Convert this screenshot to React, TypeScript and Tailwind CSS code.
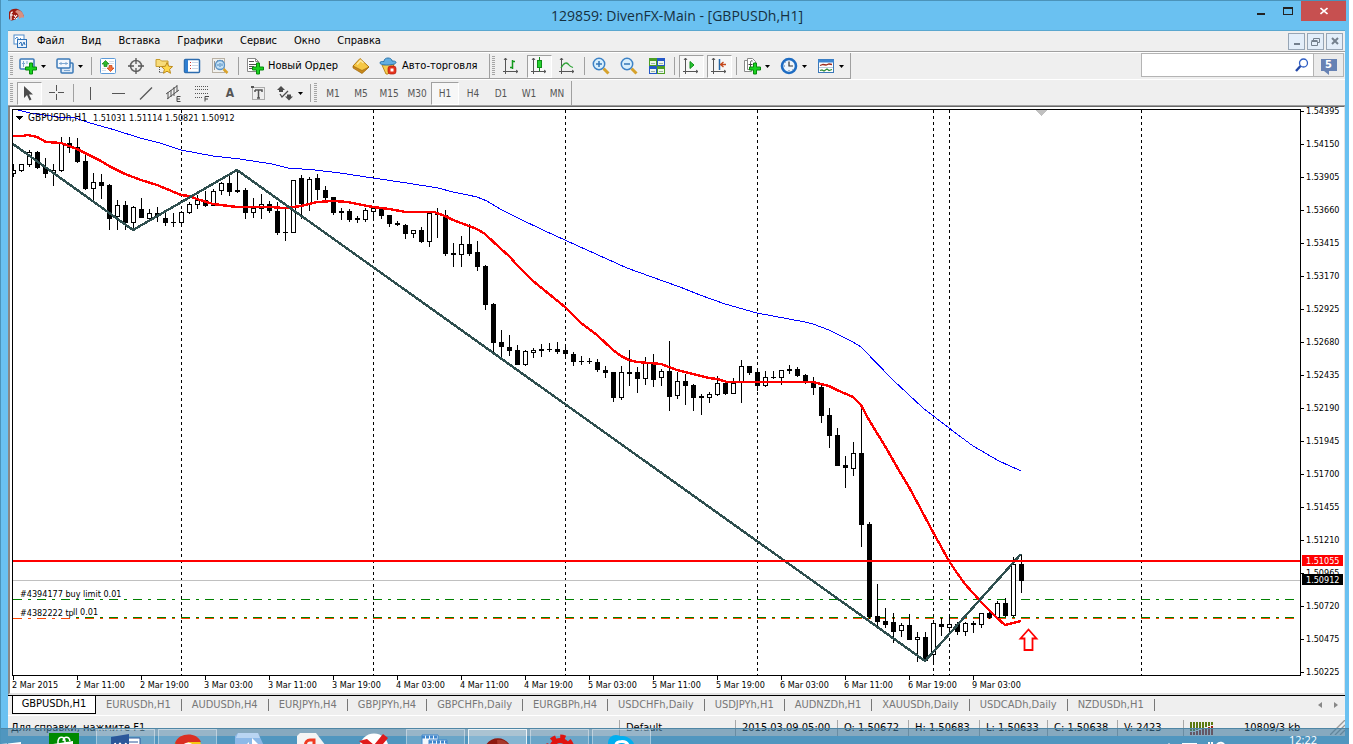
import type { ReactNode } from 'react'
import clsx from 'clsx'

type Candle = [high: number, top: number, bottom: number, low: number, filled: 0 | 1]

const FIRST_X = 13
const STEP = 8

const candles: Candle[] = [
  [164, 170, 174, 177, 0], [164, 164, 171, 172, 0], [150, 152, 165, 167, 0], [151, 152, 168, 169, 1],
  [158, 167, 174, 178, 1], [164, 170, 173, 186, 0], [137, 143, 171, 172, 0], [137, 143, 148, 153, 1],
  [138, 147, 162, 163, 1], [155, 161, 189, 190, 1], [173, 182, 189, 202, 0], [174, 182, 186, 199, 1],
  [184, 185, 219, 230, 1], [200, 205, 217, 230, 0], [201, 205, 223, 230, 1], [206, 207, 223, 230, 0],
  [198, 209, 218, 218, 1], [209, 213, 219, 221, 0], [207, 213, 216, 222, 1], [213, 218, 223, 226, 1],
  [213, 222, 223, 227, 1], [211, 212, 223, 226, 0], [202, 204, 213, 214, 0], [195, 200, 205, 209, 0],
  [191, 200, 206, 207, 1], [189, 191, 206, 206, 0], [182, 183, 191, 195, 0], [176, 183, 192, 196, 1],
  [170, 190, 192, 193, 1], [188, 190, 213, 219, 1], [198, 208, 213, 218, 0], [194, 204, 209, 219, 0],
  [201, 204, 211, 213, 1], [202, 211, 233, 235, 1], [209, 232, 233, 241, 1], [180, 180, 233, 233, 0],
  [175, 178, 204, 219, 1], [177, 179, 204, 211, 0], [174, 178, 190, 200, 1], [186, 190, 198, 200, 1],
  [197, 197, 213, 215, 1], [208, 211, 213, 220, 1], [209, 211, 220, 222, 1], [216, 218, 220, 223, 1],
  [208, 210, 220, 222, 0], [208, 208, 212, 220, 0], [208, 209, 216, 219, 1], [215, 215, 224, 227, 1],
  [221, 223, 225, 226, 1], [224, 225, 234, 239, 1], [230, 230, 234, 238, 0], [227, 230, 242, 243, 1],
  [211, 213, 242, 247, 0], [208, 213, 215, 238, 1], [210, 215, 254, 256, 1], [243, 253, 255, 267, 1],
  [236, 244, 255, 267, 0], [224, 244, 254, 256, 1], [241, 252, 267, 271, 1], [265, 266, 305, 310, 1],
  [303, 304, 343, 352, 1], [330, 342, 347, 359, 1], [335, 347, 351, 356, 1], [345, 350, 365, 365, 1],
  [350, 351, 365, 366, 0], [348, 350, 353, 358, 0], [344, 349, 351, 357, 1], [343, 349, 350, 352, 1],
  [342, 349, 352, 354, 1], [345, 350, 354, 357, 1], [352, 354, 362, 366, 1], [356, 361, 362, 365, 1],
  [358, 361, 362, 364, 1], [359, 362, 370, 372, 1], [366, 370, 373, 378, 1], [372, 372, 398, 402, 1],
  [366, 372, 398, 400, 0], [350, 372, 374, 386, 1], [367, 372, 379, 393, 1], [357, 362, 379, 385, 0],
  [354, 362, 380, 387, 1], [369, 371, 378, 386, 0], [341, 371, 397, 411, 1], [372, 381, 396, 399, 0],
  [374, 381, 386, 405, 1], [384, 385, 398, 411, 1], [394, 396, 398, 415, 1], [392, 394, 398, 403, 0],
  [376, 383, 395, 396, 0], [381, 383, 394, 395, 1], [378, 383, 394, 394, 0], [360, 366, 382, 403, 0],
  [366, 366, 373, 375, 1], [371, 372, 386, 391, 1], [371, 377, 386, 387, 0], [371, 377, 378, 379, 1],
  [370, 370, 378, 385, 0], [365, 369, 371, 374, 1], [367, 369, 376, 377, 1], [374, 375, 382, 384, 1],
  [377, 382, 388, 395, 1], [385, 387, 416, 423, 1], [408, 415, 436, 448, 1], [428, 435, 466, 466, 1],
  [456, 465, 468, 488, 1], [442, 453, 469, 476, 0], [406, 453, 525, 547, 1], [522, 524, 617, 619, 1],
  [584, 616, 622, 629, 1], [608, 621, 625, 628, 1], [613, 622, 632, 643, 1], [623, 625, 631, 637, 0],
  [614, 625, 640, 640, 1], [632, 637, 640, 662, 0], [632, 637, 661, 661, 1], [620, 623, 655, 663, 0],
  [618, 624, 627, 636, 1], [614, 624, 628, 633, 0], [622, 624, 632, 635, 1], [622, 623, 632, 636, 0],
  [621, 623, 625, 633, 1], [613, 613, 625, 628, 0], [612, 613, 618, 619, 1], [601, 603, 618, 618, 0],
  [598, 603, 616, 617, 1], [557, 564, 616, 617, 0], [555, 564, 581, 593, 1],
]

const fastAverage =
  '13,136 22,136 28,135 37,137 46,142 61,143 69,146 77,149 101,161 109,166 125,174 141,180 157,185 181,195 189,196 197,199 213,204 229,206 237,207 269,207 285,208 301,206 309,204 317,202 333,201 348,202 357,204 373,207 389,209 406,212 434,212 445,216 453,220 477,229 485,234 501,249 509,256 517,265 533,281 549,294 565,307 581,323 597,335 613,350 621,356 629,360 637,362 661,364 677,370 693,374 701,376 709,378 717,379 727,382 813,382 829,386 837,390 853,397 861,405 869,420 885,446 901,474 909,487 917,502 933,532 949,561 957,573 965,584 973,593 981,602 989,610 997,618 1005,625 1013,623 1021,621'

const slowAverage =
  '18,110 30,113 58,117 75,118 90,123 115,130 140,138 160,143 181,150 213,156 240,159 272,164 288,168 315,170 340,173 373,178 407,183 438,188 453,192 468,195 477,197 487,201 500,209 522,220 543,230 567,241 587,250 627,268 663,281 680,287 700,295 725,304 757,313 805,322 813,324 829,330 853,342 861,347 893,380 923,408 949,428 973,446 999,461 1021,471'

const zigzag = '13,144 133,230 237,170 925,661 1021,554'

const prices = [
  '1.54395', '1.54150', '1.53905', '1.53660', '1.53415', '1.53170', '1.52925', '1.52680', '1.52435',
  '1.52190', '1.51945', '1.51700', '1.51455', '1.51210', '1.50965', '1.50720', '1.50475', '1.50225',
]

const times = [
  '2 Mar 2015', '2 Mar 11:00', '2 Mar 19:00', '3 Mar 03:00', '3 Mar 11:00', '3 Mar 19:00', '4 Mar 03:00', '4 Mar 11:00',
  '4 Mar 19:00', '5 Mar 03:00', '5 Mar 11:00', '5 Mar 19:00', '6 Mar 03:00', '6 Mar 11:00', '6 Mar 19:00', '9 Mar 03:00',
]

const dayBreaks = [181, 373, 565, 757, 933, 949, 1141]

const menu = ['Файл', 'Вид', 'Вставка', 'Графики', 'Сервис', 'Окно', 'Справка']

const timeframes = ['M1', 'M5', 'M15', 'M30', 'H1', 'H4', 'D1', 'W1', 'MN']

const chartTabs = [
  'EURUSDh,H1', 'AUDUSDh,H4', 'EURJPYh,H4', 'GBPJPYh,H4', 'GBPCHFh,Daily', 'EURGBPh,H4', 'USDCHFh,Daily',
  'USDJPYh,H1', 'AUDNZDh,H1', 'XAUUSDh,Daily', 'USDCADh,Daily', 'NZDUSDh,H1',
]

function Icon({ children }: { children: ReactNode }) {
  return (
    <svg viewBox="0 0 18 18" className="size-[18px] shrink-0" fill="none" aria-hidden="true">
      {children}
    </svg>
  )
}

function Plus() {
  return <path d="M10.5 6h3v4h4v3h-4v4h-3v-4h-4v-3h4z" fill="#19d21f" stroke="#078a0c" />
}

function Axes() {
  return <path d="M3.500 1v16M1 14.500h15M2 3l1.500-2L5 3M14 13l2 1.500-2 1.500" stroke="#555" />
}

const icons = {
  newChart: (
    <Icon>
      <rect x="1" y="2" width="14" height="10" rx="1" fill="#f3f8fd" stroke="#3d7ab8" strokeWidth="1.500" />
      <path d="M4.500 4v6M3 6.500h3M8 4v3" stroke="#7da7d2" />
      <Plus />
    </Icon>
  ),
  profiles: (
    <Icon>
      <rect x="5" y="6" width="12" height="10" rx="1" fill="#dbe9f7" stroke="#3d7ab8" strokeWidth="1.500" />
      <rect x="1" y="2" width="13" height="9" rx="1" fill="#f3f8fd" stroke="#3d7ab8" strokeWidth="1.500" />
      <path d="M3 6.500h9M5 5v3M10 5v3M8 13.500h6" stroke="#7da7d2" />
    </Icon>
  ),
  market: (
    <Icon>
      <rect x="1.500" y="1.500" width="15" height="15" rx="1" fill="#fff" stroke="#5d9ad8" />
      <path d="M10 4.500h5M10 6.500h5M3 11.500h4M3 13.500h4" stroke="#d4dde8" />
      <path d="M6.500 3.500L10 7H8v2.500H5V7H3z" fill="#2eb82e" stroke="#138213" strokeWidth=".7" />
      <path d="M11.500 14.500L8 11h2V8.500h3V11h2z" fill="#f4703a" stroke="#c03c10" strokeWidth=".7" />
    </Icon>
  ),
  crosshairWindow: (
    <Icon>
      <circle cx="9" cy="9" r="5.500" stroke="#666" strokeWidth="1.500" />
      <path d="M9 1v6M9 11v6M1 9h6M11 9h6" stroke="#555" strokeWidth="1.300" />
    </Icon>
  ),
  favorites: (
    <Icon>
      <path d="M1 2.500h4l1.500 1.500H13v5.500H1z" fill="#f8dc7a" stroke="#c69c2c" />
      <path d="M4.500 10v6M4.500 15.500H9" stroke="#555" strokeDasharray="1 1" />
      <path d="M12 5.500l1.600 3.700 4 .4-3 2.700.9 4-3.500-2.100-3.500 2.100.9-4-3-2.700 4-.4z" fill="#ffd84a" stroke="#bd8b1d" />
    </Icon>
  ),
  navigator: (
    <Icon>
      <rect x="1.500" y="2.500" width="15" height="13" rx="1" fill="#fff" stroke="#2d6cae" strokeWidth="1.500" />
      <path d="M3.500 3v12" stroke="#2f7fd2" strokeWidth="3" />
      <path d="M7 5.500h1M7 8.500h1M7 11.500h1" stroke="#c33" />
      <path d="M9 5.500h6M9 8.500h6M9 11.500h6" stroke="#cbd8e8" />
    </Icon>
  ),
  tester: (
    <Icon>
      <rect x="1.500" y="1.500" width="12" height="14" fill="#f1f1ee" stroke="#b9b1a4" />
      <path d="M3.500 4v9M6.500 3v3M11.500 3v3" stroke="#999" />
      <circle cx="9" cy="8" r="4.500" fill="#bfe0f7" fillOpacity=".9" stroke="#5b93c5" strokeWidth="1.300" />
      <path d="M7 9V7M9 10V6M11 9V6.500" stroke="#4d86ba" />
      <path d="M12.500 12l4 4" stroke="#d9a22b" strokeWidth="2.500" />
    </Icon>
  ),
  newOrder: (
    <Icon>
      <path d="M1.500 1.500h8l3 3v10h-11z" fill="#fff" stroke="#888" />
      <path d="M9.500 1.500v3h3" stroke="#888" />
      <path d="M3 4.500h5M3 7.500h7M3 9.500h5M3 11.500h5" stroke="#555" />
      <Plus />
    </Icon>
  ),
  gold: (
    <Icon>
      <path d="M1 9l7-7.500 9 8.500-7 6z" fill="#f6c744" stroke="#b27a12" />
      <path d="M1 9l9 4.500 7-3.500-7 6.500-9-5.500z" fill="#c98a1c" stroke="#a06a10" strokeWidth=".7" />
      <path d="M5 7.500l3.500-4 3 2.500" stroke="#fde9a0" strokeWidth="1.500" />
    </Icon>
  ),
  autoTrade: (
    <Icon>
      <path d="M3 8l12-1-2 6-4 4H7z" fill="#f5cd52" stroke="#bb8a1c" />
      <path d="M1 6c0-2 2.500-1.500 4-1.500C5 2 7 1 9 1s4 1 4 3c1.500 0 4 0 4 1.500 0 3-16 3.500-16 .5z" fill="#63aee0" stroke="#2b75ad" />
      <rect x="9" y="9" width="8" height="8" rx="2.500" fill="#e5331d" stroke="#b01b0b" strokeWidth=".7" />
      <rect x="11.500" y="11.500" width="3" height="3" fill="#fff" />
    </Icon>
  ),
  bars: (
    <Icon>
      <Axes />
      <path d="M10.500 3v9M10.500 4.500H13M8 10.500h2.500" stroke="#12991b" strokeWidth="1.500" />
    </Icon>
  ),
  candlesticks: (
    <Icon>
      <Axes />
      <path d="M9.500 0v14" stroke="#108c18" />
      <rect x="7.500" y="3.500" width="4" height="7" fill="#25d22e" stroke="#108c18" />
    </Icon>
  ),
  line: (
    <Icon>
      <Axes />
      <path d="M3 11c3-6 6-6 8-3 1 1.500 2.500 2 4 2.500" stroke="#2ea336" strokeWidth="1.300" />
    </Icon>
  ),
  zoomIn: (
    <Icon>
      <path d="M11.500 11.500l5 5" stroke="#d6a22c" strokeWidth="3" />
      <circle cx="7" cy="7" r="5.700" fill="#d8effc" stroke="#3d82c6" strokeWidth="1.500" />
      <path d="M4 7h6M7 4v6" stroke="#3577b8" strokeWidth="1.500" />
    </Icon>
  ),
  zoomOut: (
    <Icon>
      <path d="M11.500 11.500l5 5" stroke="#d6a22c" strokeWidth="3" />
      <circle cx="7" cy="7" r="5.700" fill="#d8effc" stroke="#3d82c6" strokeWidth="1.500" />
      <path d="M4 7h6" stroke="#3577b8" strokeWidth="1.500" />
    </Icon>
  ),
  tile: (
    <Icon>
      <path d="M1 1h8v8H1zM9 9h8v8H9z" fill="#4c9f24" />
      <path d="M9 1h8v8H9zM1 9h8v8H1z" fill="#2458c8" />
      <path d="M2 4h6v4H2zM10 4h6v4h-6zM2 12h6v4H2zM10 12h6v4h-6z" fill="#eef6ea" />
      <path d="M3 6.500h4M11 6.500h4M3 14.500h4M11 14.500h4" stroke="#9fb6a6" />
    </Icon>
  ),
  autoScroll: (
    <Icon>
      <Axes />
      <path d="M8 4.500l4 3.500-4 3.500z" fill="#27c932" stroke="#108c18" />
    </Icon>
  ),
  shift: (
    <Icon>
      <Axes />
      <path d="M9.500 2v11" stroke="#2468a8" strokeWidth="1.500" />
      <path d="M16 7.500h-5M13.500 5l-3 2.500 3 2.500" stroke="#c4481c" strokeWidth="1.300" />
    </Icon>
  ),
  indicators: (
    <Icon>
      <path d="M1.500 3.500v11h7v-11z" fill="#fff" stroke="#888" />
      <path d="M4.500 1.500h5l3 3v8h-8z" fill="#fff" stroke="#888" />
      <path d="M9.500 4c-2-1-2 1-2 3v4.500M5.500 7.500h4" stroke="#444" />
      <Plus />
    </Icon>
  ),
  clock: (
    <Icon>
      <circle cx="9" cy="9" r="7" fill="#eef6fd" stroke="#1e6cc2" strokeWidth="2.600" />
      <path d="M9 4.500V9h4" stroke="#333" strokeWidth="1.200" />
      <path d="M9 13v1M4 9h1M5.500 5.500l.5.500M12.500 12.500l-.5-.5" stroke="#678" />
    </Icon>
  ),
  templates: (
    <Icon>
      <rect x="1.500" y="2.500" width="15" height="13" fill="#fff" stroke="#3b78b8" />
      <path d="M1 4h16" stroke="#3d86d2" strokeWidth="3" />
      <path d="M2 10.500h14" stroke="#b9cde0" />
      <path d="M3 8.500l3-1 3 .5 3-1 3 .5" stroke="#9b2a1c" strokeWidth="1.300" />
      <path d="M3 13.500l2-.5 2 1 3-2 2 1.500 3-1" stroke="#2c8a36" strokeWidth="1.200" />
    </Icon>
  ),
  cursor: (
    <Icon>
      <path d="M4 2v12l3-3 2.500 5.500 2-1L9 10.500h4z" fill="#4c4c4c" />
    </Icon>
  ),
  crosshair: (
    <Icon>
      <path d="M8.500 1v6M8.500 10v6M1 8.500h6M10 8.500h6" stroke="#555" />
    </Icon>
  ),
  vline: <Icon><path d="M9.500 3v13" stroke="#555" /></Icon>,
  hline: <Icon><path d="M3 9.500h13" stroke="#555" /></Icon>,
  trend: <Icon><path d="M3 15.500L15 3.500" stroke="#555" strokeWidth="1.200" /></Icon>,
  channel: (
    <Icon>
      <path d="M1 10L12 2M2 15L14 6M3 8v7M6 6v7M9 3v9M12 1v7" stroke="#555" />
      <path d="M15.500 12.500h-3.500v5h3.500M12 15h3" stroke="#444" />
    </Icon>
  ),
  fibo: (
    <Icon>
      <path d="M2 2.500h14M2 5.500h14M2 9.500h14M2 13.500h8" stroke="#555" strokeDasharray="1 1" />
      <path d="M16 12.500h-4v5M12 15h3" stroke="#444" />
    </Icon>
  ),
  label: (
    <Icon>
      <rect x="3.500" y="3.500" width="12" height="12" stroke="#666" strokeDasharray="1 1" />
      <path d="M6 6h7v2M6 6v2M9.500 6v8M8 14h3" stroke="#555" strokeWidth="1.500" />
      <path d="M2 2h3v2H2z" fill="#555" />
    </Icon>
  ),
  arrows: (
    <Icon>
      <path d="M5 2l4 4H7v2H3V6H1zM13 16.500l-4-4h2v-2h4v2h2z" fill="#4c4c4c" />
      <path d="M4 10l2 3 6-6" stroke="#4c4c4c" strokeWidth="1.300" />
    </Icon>
  ),
}

function Caret() {
  return (
    <svg viewBox="0 0 5 3" className="w-[5px] h-[3px] shrink-0" aria-hidden="true">
      <path d="M0 0h5L2.500 3z" fill="#000" />
    </svg>
  )
}

function ToolButton({ icon, label, pressed }: { icon: ReactNode; label: string; pressed?: boolean }) {
  return (
    <button type="button" aria-label={label} className="flex w-7 h-full items-center justify-center shrink-0">
      <span
        className={clsx(
          'flex items-center justify-center w-[25px] h-[23px]',
          pressed && 'bg-[#f7f7f7] border border-t-[#a0a0a0] border-l-[#a0a0a0] border-b-white border-r-white',
        )}
      >
        {icon}
      </span>
    </button>
  )
}

function MenuToolButton({ icon, label }: { icon: ReactNode; label: string }) {
  return (
    <button type="button" aria-label={label} className="flex w-[37px] h-full items-center gap-1 pl-1 shrink-0">
      {icon}
      <Caret />
    </button>
  )
}

function Separator({ className }: { className?: string }) {
  return (
    <div className={clsx('flex justify-center shrink-0 h-full py-[3px]', className)}>
      <span className="w-px h-full bg-[#a0a0a0]" />
    </div>
  )
}

function Grip() {
  return (
    <svg viewBox="0 0 7 22" className="w-[7px] h-[22px] shrink-0" aria-hidden="true">
      <path d="M3.500 1v20" stroke="#a5a5a5" strokeWidth="3" strokeDasharray="1 1" />
    </svg>
  )
}

function TitleBar() {
  return (
    <header className="grid grid-cols-[1fr_auto_1fr] h-[30px] border-t border-[#4b93b9]">
      <svg viewBox="0 0 18 14" className="w-[18px] h-[14px] mt-[7px]" aria-hidden="true">
        <path d="M1 4C4-1 14-1 16 9c-3-3-6-1-8 2-3 2-7 2-7-1z" fill="#9d1c12" />
        <path d="M9 2c4 0 7 3 7 8-2-1-4 0-5 1 0-3-1-6-4-7z" fill="#d98f80" />
        <path d="M3 12V6c0-2 1-2 2-2M2 7h3M6 7l3 4M9 7l-3 4" stroke="#fff" strokeWidth="1.200" fill="none" />
      </svg>
      <h1 className="font-['Open_Sans',sans-serif] text-sm leading-[30px] text-[#16303f]">
        129859: DivenFX-Main - [GBPUSDh,H1]
      </h1>
      <div className="flex justify-end items-start">
        <button type="button" aria-label="Minimize" className="w-[26px] h-5 flex items-center justify-center">
          <span className="w-2 h-[2px] mt-[5px] bg-[#222]" />
        </button>
        <button type="button" aria-label="Maximize" className="w-[27px] h-5 flex items-center justify-center">
          <span className="w-[10px] h-2 border border-t-2 border-[#222]" />
        </button>
        <button type="button" aria-label="Close" className="w-[45px] h-5 flex items-center justify-center bg-[#c75050]">
          <svg viewBox="0 0 8 8" className="size-2" aria-hidden="true">
            <path d="M.5 1l7 6M7.500 1l-7 6" stroke="#fff" strokeWidth="1.600" />
          </svg>
        </button>
      </div>
    </header>
  )
}

function MenuBar() {
  const mdi = 'flex items-center justify-center size-[17px] bg-[#e3eefa] border border-[#97a5b5]'
  return (
    <div className="flex items-center h-[21px] border-b border-[#a0a0a0] pr-[2px]">
      <svg viewBox="0 0 15 15" className="size-[15px] ml-[5px] mr-[9px]" aria-hidden="true">
        <rect x="1" y="1" width="10" height="9" fill="#fff" stroke="#4f8ccb" />
        <path d="M2 5l2-2 2 3 2-2" stroke="#4f8ccb" fill="none" />
        <rect x="4.500" y="5.500" width="9" height="8" fill="#eaf3fc" stroke="#2f72b8" />
        <path d="M6 10l2-2 1 4 2-4 1 3" stroke="#2f72b8" fill="none" />
      </svg>
      <nav className="flex grow gap-[17px] pt-px text-[11px]">
        {menu.map(item => (
          <button key={item} type="button">
            {item}
          </button>
        ))}
      </nav>
      <div className="flex gap-[2px]">
        <button type="button" aria-label="Minimize chart" className={mdi}>
          <span className="w-[6px] h-[2px] mt-[6px] bg-[#74808e]" />
        </button>
        <button type="button" aria-label="Restore chart" className={mdi}>
          <svg viewBox="0 0 9 9" className="size-[9px]" fill="none" aria-hidden="true">
            <path d="M2.500 3V1.500h6v4H7" stroke="#74808e" />
            <path d="M.5 4.500h6v4h-6zM.5 3.500h6" stroke="#74808e" />
          </svg>
        </button>
        <button type="button" aria-label="Close chart" className={mdi}>
          <svg viewBox="0 0 8 8" className="size-2" aria-hidden="true">
            <path d="M1 1l6 6M7 1L1 7" stroke="#74808e" strokeWidth="2" />
          </svg>
        </button>
      </div>
    </div>
  )
}

function MainToolbar() {
  return (
    <div className="flex justify-between h-[27px] border-t border-white">
      <div className="flex items-center pt-px border-b border-r border-[#a0a0a0]">
        <Grip />
        <MenuToolButton icon={icons.newChart} label="New chart" />
        <MenuToolButton icon={icons.profiles} label="Profiles" />
        <Separator className="w-[5px]" />
        <ToolButton icon={icons.market} label="Market watch" />
        <ToolButton icon={icons.crosshairWindow} label="Data window" />
        <ToolButton icon={icons.favorites} label="Navigator" />
        <ToolButton icon={icons.navigator} label="Terminal" />
        <ToolButton icon={icons.tester} label="Strategy tester" />
        <Separator className="w-2" />
        <button type="button" className="flex items-center gap-1 w-[105px] pl-1 text-[11px] whitespace-nowrap">
          {icons.newOrder}
          Новый Ордер
        </button>
        <ToolButton icon={icons.gold} label="MetaEditor" />
        <button type="button" className="flex items-center gap-[5px] w-[114px] pl-1 text-[11px] whitespace-nowrap">
          {icons.autoTrade}
          Авто-торговля
        </button>
        <span className="w-px h-full bg-[#a0a0a0]" />
        <Grip />
        <ToolButton icon={icons.bars} label="Bar chart" />
        <ToolButton icon={icons.candlesticks} label="Candlesticks" pressed />
        <ToolButton icon={icons.line} label="Line chart" />
        <Separator className="w-[6px]" />
        <ToolButton icon={icons.zoomIn} label="Zoom in" />
        <ToolButton icon={icons.zoomOut} label="Zoom out" />
        <ToolButton icon={icons.tile} label="Tile windows" />
        <Separator className="w-[6px]" />
        <ToolButton icon={icons.autoScroll} label="Auto scroll" pressed />
        <ToolButton icon={icons.shift} label="Chart shift" pressed />
        <Separator className="w-[6px]" />
        <MenuToolButton icon={icons.indicators} label="Indicators" />
        <MenuToolButton icon={icons.clock} label="Periods" />
        <MenuToolButton icon={icons.templates} label="Templates" />
      </div>
      <div className="flex h-6 pr-px">
        <label className="flex items-center w-[173px] bg-white border border-[#b4b4b4] pr-1">
          <input type="text" aria-label="Search" className="grow min-w-0 h-full px-1 text-[11px] outline-none" />
          <svg viewBox="0 0 14 14" className="size-[14px]" fill="none" aria-hidden="true">
            <circle cx="8.500" cy="5" r="4" stroke="#2f5fc4" strokeWidth="1.300" />
            <path d="M5.500 8L1 13" stroke="#2348a8" strokeWidth="2.400" />
          </svg>
        </label>
        <button
          type="button"
          className="flex items-center justify-center w-[30px] bg-[#ebebeb] border border-l-0 border-[#b4b4b4]"
        >
          <span className="relative flex items-center justify-center w-4 h-3 bg-[#6782b4] text-white text-[11px] font-bold">
            5
            <svg viewBox="0 0 5 4" className="absolute left-[3px] top-full w-[5px] h-1" aria-hidden="true">
              <path d="M0 0h5v4z" fill="#6782b4" />
            </svg>
          </span>
        </button>
      </div>
    </div>
  )
}

function DrawingToolbar() {
  return (
    <div className="flex items-center h-[26px] pt-px border-t border-white text-[10px] text-[#555]">
      <Grip />
      <ToolButton icon={icons.cursor} label="Cursor" pressed />
      <ToolButton icon={icons.crosshair} label="Crosshair" />
      <Separator className="w-[5px]" />
      <ToolButton icon={icons.vline} label="Vertical line" />
      <ToolButton icon={icons.hline} label="Horizontal line" />
      <ToolButton icon={icons.trend} label="Trendline" />
      <ToolButton icon={icons.channel} label="Equidistant channel" />
      <ToolButton icon={icons.fibo} label="Fibonacci retracement" />
      <button type="button" className="w-7 text-xs font-bold">A</button>
      <ToolButton icon={icons.label} label="Text label" />
      <MenuToolButton icon={icons.arrows} label="Arrows" />
      <Separator className="w-[3px]" />
      <Grip />
      {timeframes.map(tf => (
        <button
          key={tf}
          type="button"
          className={clsx(
            'w-7 h-[23px]',
            tf === 'H1' && 'bg-[#f7f7f7] border border-t-[#a0a0a0] border-l-[#a0a0a0] border-b-white border-r-white',
          )}
        >
          {tf}
        </button>
      ))}
      <span className="w-px h-full bg-[#a0a0a0]" />
    </div>
  )
}

function Chart() {
  return (
    <svg
      viewBox="10 107 1334 586"
      className="block w-full h-auto bg-white text-[9px]"
      fill="none"
      shapeRendering="crispEdges"
      role="img"
      aria-label="GBPUSDh,H1"
    >
      <clipPath id="plot">
        <rect x="13" y="110" width="1287" height="565" />
      </clipPath>

      <g clipPath="url(#plot)">
        {/* Period separators */}
        {dayBreaks.map(x => (
          <path key={x} d={`M${x + 0.5} 110V675`} stroke="#000" strokeDasharray="3 3" />
        ))}

        {/* Price and order levels */}
        <path d="M13 580.5H1300" stroke="#c0c0c0" />
        <path d="M13 599.5H1300" stroke="#008000" strokeDasharray="9 6 3 6" />
        <path d="M76 617.5H1300" stroke="#008000" strokeDasharray="3 6 9 6" />
        <path d="M13 618.5H1300" stroke="#ff4500" strokeDasharray="9 6 3 6" />

        {candles.map(([high, top, bottom, low, filled], i) => {
          const x = FIRST_X + i * STEP
          return (
            <g key={i}>
              <path d={`M${x + 0.5} ${high}V${low}`} stroke="#000" />
              <rect x={x - 2} y={top} width={5} height={Math.max(bottom - top, 1)} fill="#000" />
              {!filled && <rect x={x - 1} y={top + 1} width={3} height={Math.max(bottom - top - 2, 1)} fill="#fff" />}
            </g>
          )
        })}

        <polyline points={slowAverage} stroke="#0000ff" />
        <polyline points={fastAverage} stroke="#ff0000" strokeWidth="2.400" />
        <polyline points={zigzag} stroke="#2f4f4f" strokeWidth="2.400" />
        <path d="M13 561H1300" stroke="#ff0000" strokeWidth="2" />
        <path
          d="M1028.500 629.500L1036.500 638.500H1032.500V650H1024.500V638.500H1020.500Z"
          stroke="#ff0000"
          strokeWidth="1.800"
          shapeRendering="auto"
        />
        <path d="M1036 110h11l-5.500 6z" fill="#c0c0c0" />
      </g>

      {/* Frame and ticks */}
      <path d="M12.500 675.500V109.500H1300.500V675.500H12.500" stroke="#000" />
      {prices.map((price, i) => (
        <path key={price} d={`M1301 ${111.5 + i * 33}h3`} stroke="#000" />
      ))}
      {times.map((time, i) => (
        <path key={time} d={`M${13.5 + i * 64} 676v4`} stroke="#000" />
      ))}

      <g fill="#000">
        <path d="M16 116h7l-3.500 4z" />
        <text x="28" y="121" className="text-[10px]">GBPUSDh,H1</text>
        <text x="93" y="121">1.51031 1.51114 1.50821 1.50912</text>
        <text x="20" y="597">#4394177 buy limit 0.01</text>
        <text x="20" y="616">#4382222 tp</text>
        <text x="73" y="615">ll 0.01</text>
        {prices.map((price, i) => (
          <text key={price} x="1306" y={114 + i * 33}>{price}</text>
        ))}
        {times.map((time, i) => (
          <text key={time} x={12 + i * 64} y="688">{time}</text>
        ))}
      </g>

      <rect x="1302" y="555" width="41" height="11" fill="#ff0000" />
      <rect x="1302" y="574" width="41" height="11" fill="#000" />
      <g fill="#fff">
        <text x="1306" y="564">1.51055</text>
        <text x="1306" y="583">1.50912</text>
      </g>
    </svg>
  )
}

function ChartTabs() {
  return (
    <div className="flex items-start h-5 border-t border-black pl-1 text-[11px] text-[#777]">
      <button type="button" className="w-[84px] h-[18px] bg-white border border-t-0 border-black text-black">
        GBPUSDh,H1
      </button>
      {chartTabs.map(tab => (
        <button key={tab} type="button" className="flex items-center h-[18px] pl-[10px] whitespace-nowrap">
          {tab}
          <span className="w-px h-3 ml-[10px] bg-[#777]" />
        </button>
      ))}
      <div className="flex grow justify-end items-center h-[18px] gap-3 pr-[7px]">
        <button type="button" aria-label="Scroll left">
          <svg viewBox="0 0 4 6" className="w-1 h-[6px]" aria-hidden="true"><path d="M4 0v6L0 3z" fill="#888" /></svg>
        </button>
        <button type="button" aria-label="Scroll right">
          <svg viewBox="0 0 4 6" className="w-1 h-[6px]" aria-hidden="true"><path d="M0 0v6l4-3z" fill="#888" /></svg>
        </button>
      </div>
    </div>
  )
}

function StatusBar() {
  const cell = 'shrink-0 border-l border-[#a8a8a8] pl-[6px]'
  return (
    <footer className="flex h-[21px] pt-1 border-t border-white text-[11px] leading-4 whitespace-nowrap">
      <p className="grow pl-[3px]">Для справки, нажмите F1</p>
      <p className={clsx(cell, 'w-[116px]')}>Default</p>
      <p className={clsx(cell, 'w-[102px]')}>2015.03.09 05:00</p>
      <p className={clsx(cell, 'w-[71px]')}>O: 1.50672</p>
      <p className={clsx(cell, 'w-[71px]')}>H: 1.50683</p>
      <p className={clsx(cell, 'w-[68px]')}>L: 1.50633</p>
      <p className={clsx(cell, 'w-[70px]')}>C: 1.50638</p>
      <p className={clsx(cell, 'w-[66px]')}>V: 2423</p>
      <div className={clsx(cell, 'flex w-[162px]')}>
        <svg viewBox="0 0 24 13" className="w-6 h-[13px] mt-[2px]" aria-hidden="true">
          <path d="M1 0v9M4 0v9M7 0v8M10 0v7M13 0v6M16 0v5M19 0v4M22 0v3" stroke="#5b7a12" strokeWidth="2" />
          <path d="M1 10v3M4 10v3M7 9v4M10 8v5M13 7v6M16 6v7M19 5v8M22 4v9" stroke="#9c2410" strokeWidth="2" />
        </svg>
        <span className="ml-[30px] grow">10809/3 kb</span>
        <svg viewBox="0 0 15 15" className="size-[15px]" aria-hidden="true">
          <path d="M0 15L15 0M5 15L15 5M10 15l5-5" stroke="#999" strokeWidth="1.300" />
        </svg>
      </div>
    </footer>
  )
}

function TaskItem({ label, framed, active, children }: { label: string; framed?: boolean; active?: boolean; children: ReactNode }) {
  return (
    <button
      type="button"
      aria-label={label}
      className={clsx(
        'flex justify-center w-[59px] h-10 pt-1 shrink-0 mr-[3px]',
        framed && 'border border-white/40 bg-white/15',
        active && 'border border-white/80 bg-white/30',
      )}
    >
      <svg viewBox="0 0 30 30" className="size-[30px]" fill="none" aria-hidden="true">
        {children}
      </svg>
    </button>
  )
}

function Taskbar() {
  return (
    <div className="absolute inset-x-0 bottom-0 h-4 overflow-hidden flex items-start justify-between bg-[#3f7a9e]/60 border-t border-[#4f86a5]">
      <div className="flex">
        <button type="button" aria-label="Start" className="w-[33px] h-10 pt-[7px]">
          <svg viewBox="0 0 22 22" className="size-[22px]" aria-hidden="true">
            <path d="M0 2l6-.5V11H0zM7 1.500L20 0v11H7z" fill="#fff" />
          </svg>
        </button>
        <TaskItem label="Store">
          <path d="M0 0h30v30H0z" fill="#008a00" />
          <path d="M9 12V8c1-5 6-5 7 0v2M14 8c1-5 6-5 7 0" stroke="#fff" strokeWidth="1.500" />
          <path d="M4 11l20-3v16H7z" fill="#fff" />
        </TaskItem>
        <TaskItem label="Word" framed>
          <path d="M16 4h13v24H16z" fill="#fff" stroke="#2b579a" />
          <path d="M18 8h9M18 11h9M18 14h9" stroke="#2b579a" />
          <path d="M0 3l18-3v30L0 27z" fill="#2b579a" />
          <path d="M4 9l2 12 3-12 3 12 3-12" stroke="#fff" strokeWidth="2" />
        </TaskItem>
        <TaskItem label="Chrome" framed>
          <circle cx="15" cy="15" r="14" fill="#f7c815" />
          <path d="M2 9C6-2 24-2 28 8H15l-5 15z" fill="#db2f22" />
          <path d="M2 9l8 14-2 5C0 24 0 16 2 9z" fill="#2f9e44" />
          <circle cx="15" cy="15" r="6.500" fill="#fff" />
          <circle cx="15" cy="15" r="5" fill="#3f7fe0" />
        </TaskItem>
        <TaskItem label="Remote control">
          <path d="M3 0h20l7 15-7 15H3L0 27V3z" fill="#8db9e8" />
          <path d="M3 0h20l2 5H1z" fill="#b9d5f2" />
          <path d="M17 5l9 9-9 9zM14 9L8 15l6 6z" fill="#fff" />
        </TaskItem>
        <TaskItem label="Yandex">
          <path d="M0 3l3-3h16l10 13v16H0z" fill="#f4f4f4" />
          <path d="M17 24V7h-4c-6 0-6 9 0 9h4M13 16l-5 8" stroke="#f03a22" strokeWidth="3" />
        </TaskItem>
        <TaskItem label="Yandex Browser">
          <circle cx="15" cy="15" r="14.500" fill="#fff" />
          <path d="M0 8l8-2 7 6 9-11 5 4-10 12-1 13h-5V18z" fill="#e01b1b" />
        </TaskItem>
        <TaskItem label="Data manager" framed>
          <path d="M1 1h16v14H1zM8 6h18v18H8z" fill="#f3f8fd" stroke="#3f86cc" />
          <path d="M1 3h16M8 8h18" stroke="#3f86cc" strokeWidth="3" strokeDasharray="3 1" />
          <path d="M12 14l3-2 3 4 3-4 3 3" stroke="#3f86cc" />
          <circle cx="8" cy="15" r="5" fill="#d7953a" />
        </TaskItem>
        <TaskItem label="MetaTrader" active>
          <path d="M1 16C4 0 28 0 29 19c-6-6-12-3-14 3-4 6-14 4-14-6z" fill="#8d1a10" />
          <path d="M14 6c7-1 12 3 13 9-7-3-9-1-12 1z" fill="#a8392b" />
          <path d="M6 20v-5c0-3 2-3 4-3" stroke="#fff" strokeWidth="2" />
        </TaskItem>
        <TaskItem label="Settings" framed>
          <circle cx="15" cy="15" r="8.500" stroke="#e01410" strokeWidth="5" />
          <circle cx="15" cy="15" r="12" stroke="#e01410" strokeWidth="5" strokeDasharray="5 4.400" />
        </TaskItem>
        <TaskItem label="Skype" framed>
          <circle cx="9" cy="9" r="8" fill="#00aff0" />
          <circle cx="15" cy="15" r="13" fill="#00aff0" />
          <path d="M21 11c-2-5-12-4-12 0 0 5 12 3 12 8 0 4-10 5-12 0" stroke="#fff" strokeWidth="3" />
        </TaskItem>
      </div>
      <div className="flex items-start gap-4 pr-8 text-white">
        <svg viewBox="0 0 64 6" className="w-16 h-[6px] mt-3" fill="none" aria-hidden="true">
          <path d="M1 5l3-3 3 3z" fill="#fff" />
          <path d="M18 6V3h13v3M44 1v5M47 1v5M51 5c3-5 8-4 9 1" stroke="#fff" strokeWidth="2" />
        </svg>
        <time className="font-['Open_Sans',sans-serif] text-[11px] leading-4 pt-[3px] ml-11">12:22</time>
      </div>
    </div>
  )
}

export default function App() {
  return (
    <div className="pr-1 bg-white font-['DejaVu_Sans_Condensed','DejaVu_Sans',sans-serif] text-black">
      <div className="relative overflow-hidden bg-[#6ac1f1] border-l border-[#4b93b9] pl-[7px] pr-1 pb-2">
        <div className="-mr-px">
          <TitleBar />
        </div>
        <main className="bg-[#efefef] border-t border-[#5aa7cf]">
          <MenuBar />
          <MainToolbar />
          <DrawingToolbar />
          <div className="border-t border-t-[#a0a0a0]">
            <div className="bg-white border-t border-l-2 border-r border-b-2 border-t-[#666] border-l-[#888] border-r-[#e3e3e3] border-b-[#e3e3e3]">
              <Chart />
            </div>
          </div>
          <ChartTabs />
          <StatusBar />
        </main>
        <Taskbar />
      </div>
    </div>
  )
}
